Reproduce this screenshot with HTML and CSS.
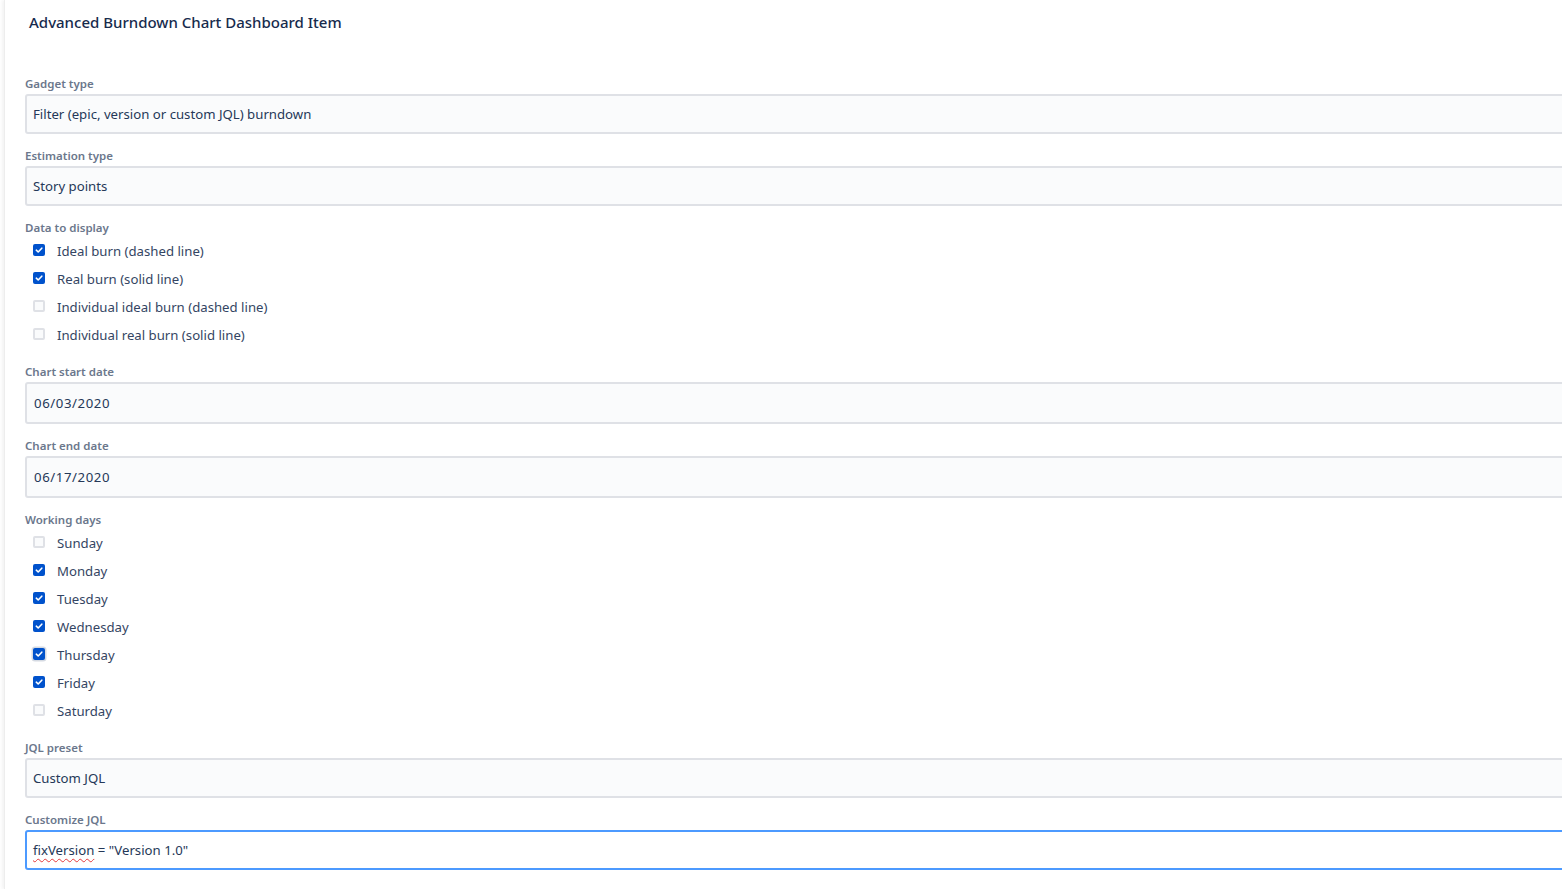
FILE: index.html
```html
<!DOCTYPE html>
<html>
<head>
<meta charset="utf-8">
<link rel="stylesheet" href="styles.css">
</head>
<body>
<div class="panel">
  <h1 class="title">Advanced Burndown Chart Dashboard Item</h1>
  <form class="form">
    <div class="field">
      <div class="label">Gadget type</div>
      <div class="control">Filter (epic, version or custom JQL) burndown</div>
    </div>
    <div class="field">
      <div class="label">Estimation type</div>
      <div class="control">Story points</div>
    </div>
    <div class="field">
      <div class="label">Data to display</div>
      <div class="checks">
        <div class="check"><span class="box on"><svg viewBox="0 0 12 12"><path d="M3.3 6.2 5.2 8 8.8 4.2" /></svg></span>Ideal burn (dashed line)</div>
        <div class="check"><span class="box on"><svg viewBox="0 0 12 12"><path d="M3.3 6.2 5.2 8 8.8 4.2" /></svg></span>Real burn (solid line)</div>
        <div class="check"><span class="box"></span>Individual ideal burn (dashed line)</div>
        <div class="check"><span class="box"></span>Individual real burn (solid line)</div>
      </div>
    </div>
    <div class="field">
      <div class="label">Chart start date</div>
      <div class="control date">06/03/2020</div>
    </div>
    <div class="field">
      <div class="label">Chart end date</div>
      <div class="control date">06/17/2020</div>
    </div>
    <div class="field">
      <div class="label">Working days</div>
      <div class="checks">
        <div class="check"><span class="box"></span>Sunday</div>
        <div class="check"><span class="box on"><svg viewBox="0 0 12 12"><path d="M3.3 6.2 5.2 8 8.8 4.2" /></svg></span>Monday</div>
        <div class="check"><span class="box on"><svg viewBox="0 0 12 12"><path d="M3.3 6.2 5.2 8 8.8 4.2" /></svg></span>Tuesday</div>
        <div class="check"><span class="box on"><svg viewBox="0 0 12 12"><path d="M3.3 6.2 5.2 8 8.8 4.2" /></svg></span>Wednesday</div>
        <div class="check"><span class="box on focus"><svg viewBox="0 0 12 12"><path d="M3.3 6.2 5.2 8 8.8 4.2" /></svg></span>Thursday</div>
        <div class="check"><span class="box on"><svg viewBox="0 0 12 12"><path d="M3.3 6.2 5.2 8 8.8 4.2" /></svg></span>Friday</div>
        <div class="check"><span class="box"></span>Saturday</div>
      </div>
    </div>
    <div class="field">
      <div class="label">JQL preset</div>
      <div class="control">Custom JQL</div>
    </div>
    <div class="field">
      <div class="label">Customize JQL</div>
      <div class="control active"><span class="misspelled">fixVersion</span>&nbsp;= &quot;Version 1.0&quot;</div>
    </div>
  </form>
</div>
</body>
</html>
```

FILE: styles.css
```css
html, body {
  margin: 0;
  padding: 0;
  background: #ffffff;
  overflow: hidden;
}
body {
  font-family: "Noto Sans", "Open Sans", sans-serif;
  color: #172b4d;
  width: 1562px;
  height: 889px;
}
.panel {
  margin-left: 4px;
  height: 889px;
  border-left: 1px solid #ededed;
  box-shadow: -2px 0 3px rgba(0, 0, 0, 0.05);
  padding-left: 20px;
  overflow: hidden;
}
.title {
  margin: 0;
  padding: 11px 0 0 4px;
  font-size: 15px;
  line-height: 22px;
  font-weight: 500;
  color: #172b4d;
  height: 40px;
}
.form {
  display: flex;
  flex-direction: column;
  gap: 14px;
  margin-top: 25px;
  margin-right: -20px;
}
.label {
  font-size: 11.5px;
  line-height: 16px;
  font-weight: 600;
  color: #6b778c;
  margin-bottom: 2px;
}
.control {
  box-sizing: border-box;
  height: 40px;
  background: #fafbfc;
  border: 2px solid #dfe1e6;
  border-radius: 3px;
  padding: 0 6px;
  display: flex;
  align-items: center;
  font-size: 13.2px;
  color: #253858;
}
.control.date {
  height: 42px;
  padding-left: 7px;
  letter-spacing: 0.6px;
}
.control.active {
  background: #ffffff;
  border-color: #4c9aff;
}
.misspelled {
  text-decoration: underline wavy #e5393b;
  text-decoration-thickness: 1px;
  text-underline-offset: 3px;
}
.checks {
  display: flex;
  flex-direction: column;
  margin-top: -1px;
  margin-bottom: 1px;
}
.check {
  height: 28px;
  display: flex;
  align-items: center;
  font-size: 13.2px;
  color: #344563;
  padding-left: 8px;
}
.box {
  box-sizing: border-box;
  width: 12px;
  height: 12px;
  border-radius: 2px;
  border: 2px solid #dfe1e6;
  background: #fafbfc;
  margin-right: 12px;
  margin-top: -2px;
  flex: none;
  display: flex;
  align-items: center;
  justify-content: center;
}
.box.on {
  background: #0052cc;
  border: none;
}
.box.focus {
  box-shadow: 0 0 0 1.5px #d5dae2;
}
.box svg {
  width: 12px;
  height: 12px;
  fill: none;
  stroke: #ffffff;
  stroke-width: 1.6;
  stroke-linecap: round;
  stroke-linejoin: round;
}
```
